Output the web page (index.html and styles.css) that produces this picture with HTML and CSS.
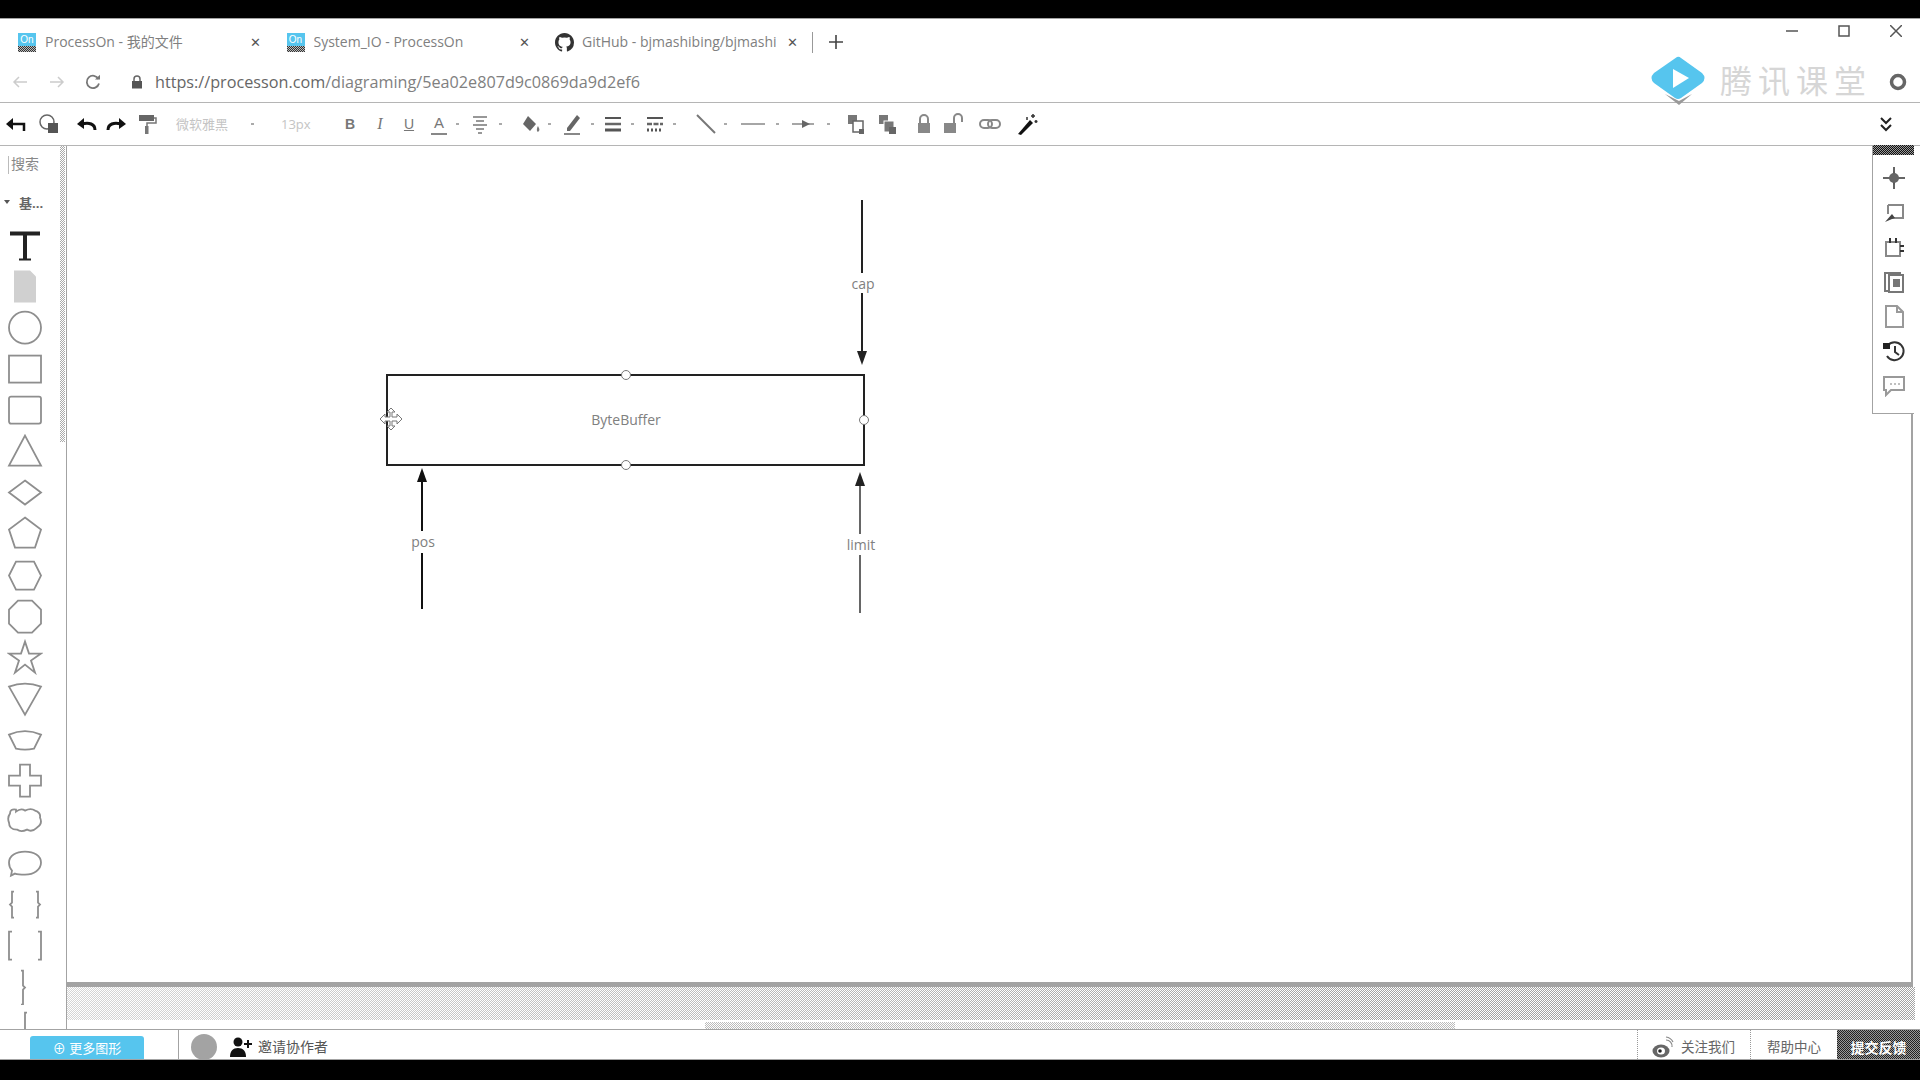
FILE: index.html
```html
<!DOCTYPE html>
<html lang="zh">
<head>
<meta charset="utf-8">
<title>System_IO - ProcessOn</title>
<link rel="stylesheet" href="styles.css">
</head>
<body>
<div class="blackbar"></div>

<div class="tabrow">
  <div class="tab"><span class="fav">On</span><span class="tabtitle">ProcessOn - 我的文件</span><span class="tabx">✕</span></div>
  <div class="tab"><span class="fav">On</span><span class="tabtitle">System_IO - ProcessOn</span><span class="tabx">✕</span></div>
  <div class="tab">
    <svg class="gh" viewBox="0 0 16 16"><path fill="#333" d="M8 0C3.6 0 0 3.6 0 8c0 3.5 2.3 6.5 5.5 7.6.4.1.5-.2.5-.4v-1.4c-2.2.5-2.7-1-2.7-1-.4-.9-.9-1.2-.9-1.2-.7-.5.1-.5.1-.5.8.1 1.2.8 1.2.8.7 1.2 1.9.9 2.3.7.1-.5.3-.9.5-1.1-1.8-.2-3.6-.9-3.6-4 0-.9.3-1.6.8-2.1-.1-.2-.4-1 .1-2.1 0 0 .7-.2 2.2.8a7.600 7.600 0 0 1 4 0c1.500-1 2.200-.8 2.200-.8.4 1.100.2 1.900.1 2.100.5.6.8 1.300.8 2.100 0 3.100-1.900 3.700-3.700 3.900.3.3.6.8.6 1.500v2.200c0 .2.1.5.6.4A8 8 0 0 0 16 8c0-4.400-3.600-8-8-8z"/></svg>
    <span class="tabtitle">GitHub - bjmashibing/bjmashi</span><span class="tabx">✕</span>
  </div>
  <span class="tabdiv"></span>
  <svg class="plus" viewBox="0 0 14 14"><path d="M7 0v14M0 7h14" stroke="#444" stroke-width="1.600"/></svg>
  <div class="winctl">
    <svg viewBox="0 0 12 12"><path d="M0 6h12" stroke="#555" stroke-width="1.500"/></svg>
    <svg viewBox="0 0 12 12"><path d="M1 1h10v10H1z" fill="none" stroke="#555" stroke-width="1.500"/></svg>
    <svg viewBox="0 0 12 12"><path d="M0 0l12 12M12 0L0 12" stroke="#555" stroke-width="1.500"/></svg>
  </div>
</div>

<div class="addrrow">
  <svg class="nav back" viewBox="0 0 16 16"><path d="M15 8H2M7 3L2 8l5 5" fill="none" stroke="#ccc" stroke-width="1.500"/></svg>
  <svg class="nav fwd" viewBox="0 0 16 16"><path d="M1 8h13M9 3l5 5-5 5" fill="none" stroke="#ccc" stroke-width="1.500"/></svg>
  <svg class="nav reload" viewBox="0 0 16 16"><path d="M13.500 5A6.200 6.200 0 1 0 14 9.500" fill="none" stroke="#777" stroke-width="1.800"/><path d="M10 5.500h5V.8z" fill="#777"/></svg>
  <svg class="lock" viewBox="0 0 12 14"><path d="M3 6V4a3 3 0 0 1 6 0v2" fill="none" stroke="#666" stroke-width="1.500"/><rect x="1" y="6" width="10" height="7.500" fill="#555"/></svg>
  <span class="url"><span class="urlhost">https://processon.com</span>/diagraming/5ea02e807d9c0869da9d2ef6</span>
  <svg class="ring" viewBox="0 0 18 18"><circle cx="9" cy="9" r="6.500" fill="none" stroke="#666" stroke-width="3.500"/></svg>
</div>

<div class="toolbar">
  <svg class="ti m4" viewBox="0 0 24 24"><path d="M20 19v-7H7" fill="none" stroke="#111" stroke-width="2.500"/><path d="M9 6l-7 6 7 6z" fill="#111"/></svg>
  <svg class="ti m9" viewBox="0 0 24 24"><circle cx="10" cy="10" r="7" fill="none" stroke="#666" stroke-width="1.500"/><rect x="11" y="11" width="10" height="10" fill="#555"/></svg>
  <svg class="ti m14" viewBox="0 0 24 24"><path d="M20 18c0-6-6-8-13-6" fill="none" stroke="#111" stroke-width="3"/><path d="M9 6l-7 6 7 5z" fill="#111"/></svg>
  <svg class="ti m5" viewBox="0 0 24 24"><path d="M4 18c0-6 6-8 13-6" fill="none" stroke="#111" stroke-width="3"/><path d="M15 6l7 6-7 5z" fill="#111"/></svg>
  <svg class="ti m7" viewBox="0 0 24 24"><rect x="4" y="3" width="15" height="6" fill="#666"/><path d="M19 6h2v5h-9v4" fill="none" stroke="#777" stroke-width="1.500"/><rect x="10" y="14" width="3.500" height="8" fill="#777"/></svg>
  <span class="tbtext fontname m17">微软雅黑</span>
  <span class="caret m21"></span>
  <span class="tbtext fontsize m27">13px</span>
  <span class="glyph m29 bold">B</span>
  <span class="glyph m6 ital">I</span>
  <span class="glyph m5 under">U</span>
  <span class="glyph m10 acolor">A</span>
  <span class="caret m5"></span>
  <svg class="ti m9" viewBox="0 0 24 24"><path d="M5 5h14M8 9h8M5 13h14M8 17h8M10 21h4" stroke="#777" stroke-width="1.600"/></svg>
  <span class="caret m7"></span>
  <svg class="ti m16" viewBox="0 0 24 24"><path d="M10 4l8 8-6 7-7-7z" fill="#666"/><path d="M20 14c1.500 3 2 4 .5 5.500S18 17 20 14z" fill="#777"/></svg>
  <span class="caret m6"></span>
  <svg class="ti m9" viewBox="0 0 24 24"><path d="M7 16L17 3l3 3L10 19H7z" fill="#666"/><path d="M4 22h16" stroke="#888" stroke-width="2"/></svg>
  <span class="caret m7"></span>
  <svg class="ti m7" viewBox="0 0 24 24"><path d="M4 6h16" stroke="#555" stroke-width="2"/><path d="M4 12h16" stroke="#666" stroke-width="2.500"/><path d="M4 18h16" stroke="#555" stroke-width="3"/></svg>
  <span class="caret m6"></span>
  <svg class="ti m9" viewBox="0 0 24 24"><path d="M4 6h16" stroke="#555" stroke-width="2"/><path d="M4 12h16" stroke="#666" stroke-width="2.500" stroke-dasharray="5 1.500"/><path d="M4 18h16" stroke="#555" stroke-width="3" stroke-dasharray="2 2"/></svg>
  <span class="caret m6"></span>
  <svg class="ti m18" viewBox="0 0 24 24"><path d="M3 3l18 18" stroke="#777" stroke-width="2"/></svg>
  <span class="caret m6"></span>
  <svg class="ti m14" viewBox="0 0 24 24"><path d="M0 12h24" stroke="#888" stroke-width="1.500"/></svg>
  <span class="caret m11"></span>
  <svg class="ti m13" viewBox="0 0 24 24"><path d="M0 12h22" stroke="#888" stroke-width="1.500"/><path d="M10 8l8 4-8 4z" fill="#666"/></svg>
  <span class="caret m11"></span>
  <svg class="ti m14" viewBox="0 0 24 24"><rect x="4" y="3" width="9" height="9" fill="#777"/><rect x="9" y="9" width="10" height="11" fill="#fff" stroke="#666" stroke-width="1.500"/><rect x="15" y="17" width="5" height="5" fill="#666"/></svg>
  <svg class="ti m7" viewBox="0 0 24 24"><rect x="4" y="3" width="9" height="9" fill="#777"/><rect x="9" y="9" width="10" height="11" fill="#777" stroke="#fff"/><rect x="14" y="15" width="7" height="7" fill="#666"/></svg>
  <svg class="ti m13" viewBox="0 0 24 24"><path d="M8 11V7a4 4 0 0 1 8 0v4" fill="none" stroke="#888" stroke-width="2"/><rect x="6" y="11" width="12" height="10" fill="#888"/></svg>
  <svg class="ti m5" viewBox="0 0 24 24"><path d="M13 11V6a4 4 0 0 1 8 0v4" fill="none" stroke="#888" stroke-width="2"/><rect x="3" y="11" width="12" height="10" fill="#888"/></svg>
  <svg class="ti m13" viewBox="0 0 24 24"><rect x="2" y="8" width="12" height="8" rx="4" fill="none" stroke="#888" stroke-width="2"/><rect x="10" y="8" width="12" height="8" rx="4" fill="none" stroke="#888" stroke-width="2"/></svg>
  <svg class="ti m13" viewBox="0 0 24 24"><path d="M3 22L15 8l3 3L6 23z" fill="#111"/><path d="M18 2v4M16 4h4M21 8v3M19.500 9.500h3M12 5v3" stroke="#333" stroke-width="1.500"/></svg>
  <svg class="chev" viewBox="0 0 14 16"><path d="M2 2l5 5 5-5M2 9l5 5 5-5" fill="none" stroke="#222" stroke-width="2"/></svg>
</div>

<div class="main">
  <aside class="panel">
    <span class="panelscroll"></span>
    <div class="search">搜索</div>
    <div class="cat"><span class="cattri"></span><span class="catname">基...</span></div>
    <svg class="shape" viewBox="0 0 36 36"><path d="M3 4h30v4H20v23h4v2H12v-2h4V8H3z" fill="#222"/></svg>
    <svg class="shape" viewBox="0 0 36 36"><path d="M7 2h16l6 6v26H7z" class="ditherfill"/></svg>
    <svg class="shape" viewBox="0 0 36 36"><circle cx="18" cy="18" r="16"/></svg>
    <svg class="shape" viewBox="0 0 36 36"><rect x="2" y="4" width="32" height="27"/></svg>
    <svg class="shape" viewBox="0 0 36 36"><rect x="2" y="4" width="32" height="27" rx="2"/></svg>
    <svg class="shape" viewBox="0 0 36 36"><path d="M18 2l16 30H2z"/></svg>
    <svg class="shape" viewBox="0 0 36 36"><path d="M18 6l16 12-16 12L2 18z"/></svg>
    <svg class="shape" viewBox="0 0 36 36"><path d="M18 2l16 12-6 18H8L2 14z"/></svg>
    <svg class="shape" viewBox="0 0 36 36"><path d="M9 4h18l7 14-7 14H9L2 18z"/></svg>
    <svg class="shape" viewBox="0 0 36 36"><path d="M11 2h14l9 9v14l-9 9H11l-9-9V11z"/></svg>
    <svg class="shape" viewBox="0 0 36 36"><path d="M18 2l4 12h12l-10 7 4 12-10-8-10 8 4-12L2 14h12z"/></svg>
    <svg class="shape" viewBox="0 0 36 36"><path d="M2 6q16-6 32 0L18 34z"/></svg>
    <svg class="shape" viewBox="0 0 36 36"><path d="M2 13q16-7 32 0l-7 14q-9 2-18 0z"/></svg>
    <svg class="shape" viewBox="0 0 36 36"><path d="M13 2h10v11h11v10H23v11H13V23H2V13h11z"/></svg>
    <svg class="shape" viewBox="0 0 36 36"><path d="M9 7q5-4 9-1 6-3 10 0 6 2 5 7 3 6-3 10-5 5-10 2-6 3-10 0-8 0-8-7-2-5 1-9 0-5 6-4z"/></svg>
    <svg class="shape" viewBox="0 0 36 36"><path d="M18 6c9 0 16 4 16 11s-7 12-16 12c-4 0-7 0-10-1l-4 2 1-5c-2-2-3-5-3-8C2 10 9 6 18 6z"/></svg>
    <svg class="shape" viewBox="0 0 36 36"><path d="M7 5H5v11l-2 2 2 2v11h2M29 5h2v11l2 2-2 2v11h-2"/></svg>
    <svg class="shape" viewBox="0 0 36 36"><path d="M5 4H2v28h3M31 4h3v28h-3"/></svg>
    <svg class="shape" viewBox="0 0 36 36"><path d="M14 2h2v15l2 2-2 2v15h-2"/></svg>
    <svg class="shape" viewBox="0 0 36 36"><path d="M20 2h-2v34h-5"/></svg>
  </aside>

  <div class="work">
    <div class="paper">
      <svg class="diagram" viewBox="67 146 1844 836">
        <rect x="387" y="375" width="477" height="90" fill="#fff" stroke="#222" stroke-width="2"/>
        <path d="M862 200v73M862 293v60" stroke="#222" stroke-width="2"/>
        <path d="M857 351h10l-5 14z" fill="#222"/>
        <path d="M422 482v49M422 553v56" stroke="#111" stroke-width="2"/>
        <path d="M417 482h10l-5-14z" fill="#111"/>
        <path d="M860 486v48M860 555v58" stroke="#666" stroke-width="2"/>
        <path d="M855 486h10l-5-14z" fill="#222"/>
        <g class="handle">
          <circle cx="626" cy="375" r="4.500"/>
          <circle cx="864" cy="420" r="4.500"/>
          <circle cx="626" cy="465" r="4.500"/>
        </g>
        <path d="M391 408l4 4h-3v5h5v-3l5 5-5 5v-3h-5v5h3l-4 4-4-4h3v-5h-5v3l-5-5 5-5v3h5v-5h-3z" fill="#fff" stroke="#777"/>
        <text class="lbl" x="626" y="425">ByteBuffer</text>
        <text class="lbl" x="863" y="289">cap</text>
        <text class="lbl" x="423" y="547">pos</text>
        <text class="lbl" x="861" y="550">limit</text>
      </svg>
    </div>
    <div class="edge"></div>
    <div class="dither"></div>
    <div class="hscroll"></div>
  </div>

  <div class="rightpanel">
    <div class="rptop"></div>
    <svg class="ri" viewBox="0 0 24 24"><path d="M12 1v22M1 12h22" stroke="#333" stroke-width="1.500"/><path d="M12 5l3 7-3 7-3-7z" fill="#555"/><circle cx="12" cy="12" r="5" fill="#666"/></svg>
    <svg class="ri" viewBox="0 0 24 24"><path d="M6 4h15v13H10" fill="none" stroke="#888" stroke-width="2"/><path d="M6 4v9" stroke="#888" stroke-width="2"/><path d="M3 21l7-8 3 4-3 1z" fill="#444"/></svg>
    <svg class="ri" viewBox="0 0 24 24"><rect x="4" y="7" width="14" height="14" fill="none" stroke="#888" stroke-width="2"/><path d="M8 3v5M14 3v5M18 11h4M18 16h4" stroke="#333" stroke-width="2"/></svg>
    <svg class="ri" viewBox="0 0 24 24"><rect x="3" y="3" width="15" height="18" fill="none" stroke="#777" stroke-width="2"/><rect x="7" y="5" width="14" height="17" fill="#fff" stroke="#777" stroke-width="2"/><rect x="11" y="9" width="7" height="8" fill="#777"/></svg>
    <svg class="ri" viewBox="0 0 24 24"><path d="M4 2h11l6 6v15H4z M15 2v6h6" fill="none" stroke="#999" stroke-width="2"/></svg>
    <svg class="ri" viewBox="0 0 24 24"><path d="M6 6a9 9 0 1 1-1 11" fill="none" stroke="#333" stroke-width="2"/><path d="M1 4h7v6H1z" fill="#222"/><path d="M13 7v6l4 3" fill="none" stroke="#333" stroke-width="2"/></svg>
    <svg class="ri" viewBox="0 0 24 24"><path d="M2 4h20v13H9l-5 5v-5H2z" fill="none" stroke="#999" stroke-width="2"/><path d="M8 11h2M12 11h2M16 11h2" stroke="#aaa" stroke-width="1.500"/></svg>
  </div>
</div>

<div class="footer">
  <div class="morebox"><span class="morebtn">⊕ 更多图形</span></div>
  <span class="avatar"></span>
  <svg class="invite" viewBox="0 0 22 20"><circle cx="8" cy="5" r="4.500" fill="#111"/><path d="M0 20c0-6 3-9 8-9s8 3 8 9z" fill="#111"/><path d="M18 3v8M14 7h8" stroke="#111" stroke-width="2"/></svg>
  <span class="ftext invitetxt">邀请协作者</span>
  <div class="fright">
    <div class="fcell follow">
      <svg class="weibo" viewBox="0 0 22 22"><ellipse cx="9" cy="15" rx="8.500" ry="6.500" fill="#666"/><ellipse cx="9" cy="15" rx="4" ry="3.500" fill="#fff"/><circle cx="8" cy="15" r="1.800" fill="#222"/><path d="M14 4a6 6 0 0 1 6 7M14 1a9 9 0 0 1 7 5" fill="none" stroke="#888" stroke-width="1.200"/></svg>
      <span class="ftext">关注我们</span>
    </div>
    <div class="fcell help"><span class="ftext">帮助中心</span></div>
    <div class="feedback">提交反馈</div>
  </div>
</div>
<div class="blackbottom"></div>

<div class="watermark">
  <svg class="wmlogo" viewBox="0 0 56 50"><path d="M27 1Q29 0 31 2L52 17Q57 22 52 27L31 42Q28 44 25 42L4 27Q-1 22 4 17z" fill="#56c5ee"/><path d="M23 13l16 9-16 10z" fill="#fff"/><path d="M15 38l14 11 13-11-13 7z" fill="#9a9a9a"/></svg>
  <span class="wmtext">腾讯课堂</span>
</div>
</body>
</html>
```
FILE: styles.css
```css
* { box-sizing: border-box; }
html, body { margin: 0; padding: 0; }
body {
  width: 1920px;
  height: 1080px;
  overflow: hidden;
  display: flex;
  flex-direction: column;
  background: #fff;
  color: #777;
  font-family: "Open Sans", "Noto Sans CJK SC", sans-serif;
  position: relative;
}
.blackbar { height: 18px; background: #000; flex: none; }
.blackbottom { height: 20px; background: #000; flex: none; }

/* tabs */
.tabrow {
  flex: none;
  height: 43px;
  border-top: 1px solid #a3a3a3;
  padding-top: 4px;
  display: flex;
  align-items: center;
}
.tab {
  width: 268.500px;
  flex: none;
  display: flex;
  align-items: center;
  padding: 0 7px 0 18px;
  overflow: hidden;
}
.fav {
  flex: none;
  width: 18px;
  height: 19px;
  background: linear-gradient(to bottom, #56c5ee 0 13px, transparent 13px), repeating-conic-gradient(#333 0 25%, #bbb 0 50%) 0 0/2px 2px;
  color: #fff;
  font: 10px/13px "Liberation Sans", sans-serif;
  text-align: center;
}
.gh { width: 19px; height: 19px; flex: none; margin-right: -1px; }
.tabtitle {
  flex: 1;
  margin-left: 9px;
  font-size: 14px;
  line-height: 20px;
  color: #808080;
  white-space: nowrap;
  overflow: hidden;
}
.tabx { flex: none; width: 12px; font-size: 13px; color: #555; text-align: center; }
.tabdiv { width: 1px; height: 21px; background: #999; margin-left: 6px; flex: none; }
.plus { width: 14px; height: 14px; margin-left: 16px; flex: none; }
.winctl {
  margin-left: auto;
  align-self: flex-start;
  margin-top: 2px;
  display: flex;
  gap: 40px;
  padding-right: 18px;
}
.winctl svg { width: 12px; height: 12px; display: block; }

/* address */
.addrrow {
  flex: none;
  height: 42px;
  display: flex;
  align-items: center;
  border-bottom: 1px solid #b5b5b5;
}
.nav { width: 16px; height: 16px; flex: none; }
.back { margin-left: 12px; }
.fwd { margin-left: 21px; }
.reload { margin-left: 20px; }
.lock { width: 12px; height: 14px; margin-left: 30px; flex: none; }
.url {
  margin-left: 12px;
  font-size: 16.200px;
  line-height: 20px;
  color: #808080;
  white-space: nowrap;
}
.urlhost { color: #666; }
.ring { width: 18px; height: 18px; margin-left: auto; margin-right: 13px; flex: none; }

/* toolbar */
.toolbar {
  flex: none;
  height: 43px;
  display: flex;
  align-items: center;
  border-bottom: 1px solid #b5b5b5;
}
.ti { width: 24px; height: 24px; flex: none; }
.caret { width: 3px; height: 2px; background: #aaa; flex: none; }
.tbtext { color: #c4c4c4; font-size: 13px; line-height: 18px; flex: none; }
.fontname { width: 54px; white-space: nowrap; }
.fontsize { width: 28px; }
.glyph {
  width: 24px;
  flex: none;
  text-align: center;
  font-family: "Liberation Sans", sans-serif;
  font-size: 14px;
  line-height: 18px;
  color: #777;
}
.bold { font-weight: 700; }
.ital { font-style: italic; font-family: "Liberation Serif", serif; font-size: 16px; }
.under { text-decoration: underline; }
.acolor { font-size: 15px; border-bottom: 2px solid #888; width: 16px; margin-right: 4px; padding-bottom: 1px; }
.chev { width: 14px; height: 16px; margin-left: auto; margin-right: 27px; flex: none; }

.m4 { margin-left: 4px; } .m5 { margin-left: 5px; } .m6 { margin-left: 6px; } .m7 { margin-left: 7px; }
.m9 { margin-left: 9px; } .m10 { margin-left: 10px; } .m11 { margin-left: 11px; } .m13 { margin-left: 13px; }
.m14 { margin-left: 14px; } .m16 { margin-left: 16px; } .m17 { margin-left: 17px; } .m18 { margin-left: 18px; }
.m21 { margin-left: 21px; } .m27 { margin-left: 27px; } .m29 { margin-left: 29px; }

/* main */
.main {
  flex: none;
  height: 883px;
  display: flex;
  position: relative;
}
.panel {
  width: 66px;
  flex: none;
  position: relative;
  overflow: hidden;
  display: flex;
  flex-direction: column;
}
.panelscroll {
  position: absolute;
  left: 60px;
  top: 0;
  width: 5px;
  height: 296px;
  background: repeating-conic-gradient(#aaa 0 25%, #fff 0 50%) 0 0/2px 2px;
}
.search {
  flex: none;
  height: 38px;
  margin-left: 8px;
  padding-left: 3px;
  font-size: 14px;
  line-height: 36px;
  color: #888;
  background: linear-gradient(#bbb, #bbb) 0 10px/1px 18px no-repeat;
}
.cat {
  flex: none;
  height: 41px;
  padding: 0 0 5px 4px;
  display: flex;
  align-items: center;
  font-size: 13px;
  color: #666;
}
.cattri {
  width: 0;
  height: 0;
  border-left: 3px solid transparent;
  border-right: 3px solid transparent;
  border-top: 4px solid #555;
}
.catname { margin-left: 9px; font-weight: 700; white-space: nowrap; }
.shape {
  flex: none;
  width: 36px;
  height: 41.200px;
  margin-left: 7px;
  padding: 2.600px 0;
  fill: none;
  stroke: #8e8e8e;
  stroke-width: 1.800;
}
.shape:nth-of-type(1) { stroke: none; }
.ditherfill { fill: #d0d0d0; stroke: none; }

/* work area */
.work {
  flex: 1;
  min-width: 0;
  border-left: 1px solid #a3a3a3;
  display: flex;
  flex-direction: column;
}
.paper {
  flex: none;
  height: 836px;
  margin-right: 7px;
  border-right: 2px solid #a3a3a3;
}
.diagram { display: block; width: 1844px; height: 836px; }
.handle circle { fill: #fff; stroke: #777; stroke-width: 1; }
.lbl {
  font-family: "Open Sans", sans-serif;
  font-size: 14px;
  fill: #808080;
  text-anchor: middle;
}
.edge { flex: none; height: 5px; background: #a3a3a3; margin-right: 7px; }
.dither {
  flex: none;
  height: 33px;
  margin-right: 5px;
  background:
    linear-gradient(to right, rgba(255,255,255,.55), rgba(255,255,255,0) 70%),
    repeating-conic-gradient(#a3a3a3 0 25%, #fff 0 50%) 0 0/2px 2px;
}
.hscroll {
  flex: none;
  width: 750px;
  height: 7px;
  margin: 2px 0 0 638px;
  background: repeating-conic-gradient(#bbb 0 25%, #fff 0 50%) 0 0/2px 2px;
}
.rightpanel {
  position: absolute;
  right: 6px;
  top: -1px;
  width: 42px;
  height: 269px;
  background: #fff;
  border-left: 1px solid #a3a3a3;
  border-bottom: 1px solid #a3a3a3;
  display: flex;
  flex-direction: column;
  align-items: center;
}
.rptop {
  align-self: stretch;
  height: 10px;
  flex: none;
  background: repeating-conic-gradient(#111 0 25%, #999 0 50%) 0 0/2px 2px;
  margin-bottom: 11px;
}
.ri { width: 24px; height: 24px; flex: none; margin-bottom: 10.500px; }

/* footer */
.footer {
  flex: none;
  height: 31px;
  display: flex;
  align-items: stretch;
  border-top: 1px solid #a3a3a3;
  border-bottom: 1px solid #a3a3a3;
}
.morebox {
  width: 179px;
  flex: none;
  border-right: 1px solid #a3a3a3;
  padding: 6px 0 0 30px;
}
.morebtn {
  display: block;
  width: 114px;
  height: 23px;
  background: #56c5ee;
  border-radius: 3px 3px 0 0;
  color: #fff;
  font-size: 13px;
  line-height: 25px;
  text-align: center;
}
.avatar {
  width: 26px;
  height: 26px;
  border-radius: 50%;
  background: #a3a3a3;
  margin: 4px 0 0 12px;
  flex: none;
}
.invite { width: 22px; height: 20px; margin: 7px 0 0 13px; flex: none; }
.ftext { font-size: 13.500px; line-height: 20px; color: #666; white-space: nowrap; align-self: center; }
.invitetxt { margin-left: 6px; font-size: 14px; color: #555; padding-top: 5px; }
.fright { margin-left: auto; display: flex; align-items: stretch; }
.fcell { display: flex; align-items: center; border-left: 1px dotted #999; padding-top: 5px; }
.follow { width: 113px; padding-left: 14px; }
.weibo { width: 22px; height: 22px; flex: none; margin-right: 7px; }
.help { width: 87px; padding-left: 16px; }
.feedback {
  width: 83px;
  background: repeating-conic-gradient(#222 0 25%, #999 0 50%) 0 0/2px 2px;
  color: #fff;
  font-size: 14px;
  font-weight: 700;
  line-height: 35px;
  text-align: center;
}

/* screen-recording watermark, over the browser chrome */
.watermark {
  position: absolute;
  left: 1650px;
  top: 56px;
  display: flex;
  align-items: center;
}
.wmlogo { width: 56px; height: 50px; flex: none; }
.wmtext {
  margin-left: 14px;
  font-size: 32px;
  letter-spacing: 6px;
  line-height: 40px;
  color: #d6d6d6;
  white-space: nowrap;
}
```
